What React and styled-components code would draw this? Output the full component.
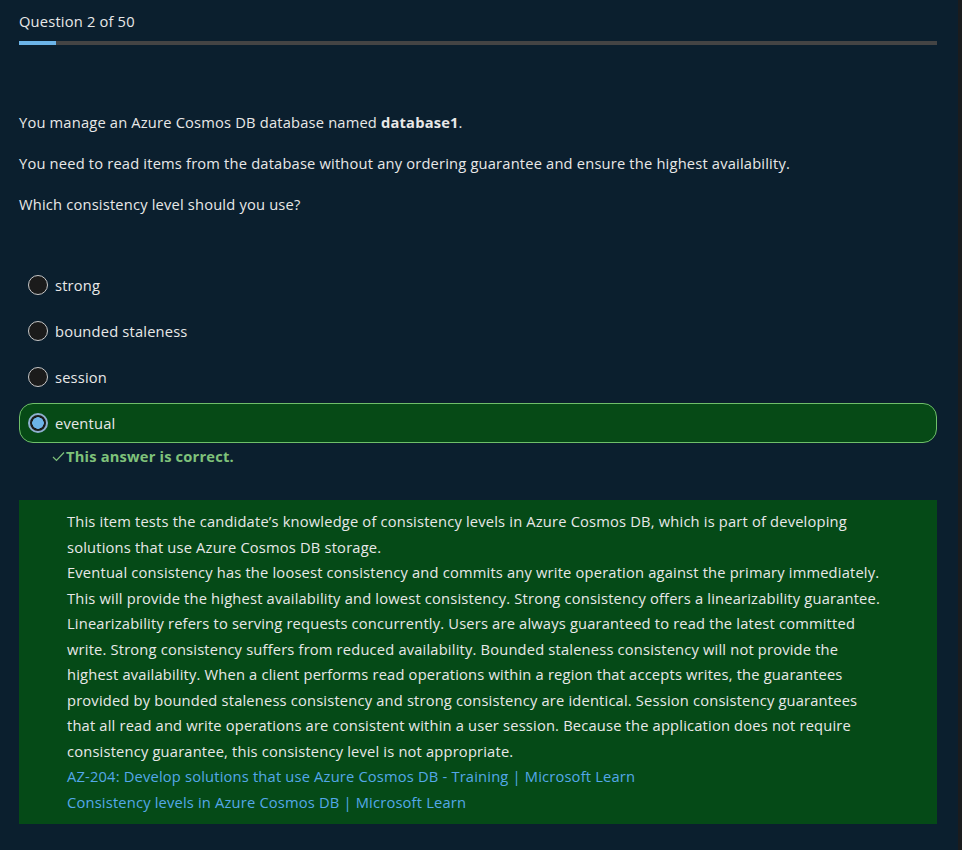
import styled, { createGlobalStyle } from "styled-components";

const GlobalStyle = createGlobalStyle`
  body {
    margin: 0;
    background: #0b1f2e;
    font-family: "Open Sans", "Noto Sans", sans-serif;
    color: #e8e8e8;
  }
`;

const options = [
  { label: "strong" },
  { label: "bounded staleness" },
  { label: "session" },
  { label: "eventual", selected: true },
];

export default function App() {
  return (
    <>
      <GlobalStyle />
      <Page>
        <Header>
          <Counter>Question 2 of 50</Counter>
          <Progress>
            <ProgressFill style={{ width: `${(2 / 50) * 100}%` }} />
          </Progress>
        </Header>

        <Question>
          <Para>
            You manage an Azure Cosmos DB database named <b>database1</b>.
          </Para>
          <Para>
            You need to read items from the database without any ordering
            guarantee and ensure the highest availability.
          </Para>
          <Para>Which consistency level should you use?</Para>
        </Question>

        <Options>
          {options.map((o) => (
            <Option key={o.label} $selected={o.selected}>
              <Radio $selected={o.selected} />
              <span>{o.label}</span>
            </Option>
          ))}
        </Options>
        <Correct>
          <svg width="13" height="11" viewBox="0 0 13 11">
            <polyline
              points="1,6 4.5,9.5 12,1.5"
              fill="none"
              stroke="#7fc27a"
              strokeWidth="1.2"
            />
          </svg>
          This answer is correct.
        </Correct>

        <Explanation>
          This item tests the candidate’s knowledge of consistency levels in
          Azure Cosmos DB, which is part of developing solutions that use Azure
          Cosmos DB storage.
          <br />
          Eventual consistency has the loosest consistency and commits any write
          operation against the primary immediately. This will provide the
          highest availability and lowest consistency. Strong consistency offers
          a linearizability guarantee. Linearizability refers to serving
          requests concurrently. Users are always guaranteed to read the latest
          committed write. Strong consistency suffers from reduced availability.
          Bounded staleness consistency will not provide the highest
          availability. When a client performs read operations within a region
          that accepts writes, the guarantees provided by bounded staleness
          consistency and strong consistency are identical. Session consistency
          guarantees that all read and write operations are consistent within a
          user session. Because the application does not require consistency
          guarantee, this consistency level is not appropriate.
          <LinkLine href="#">
            AZ-204: Develop solutions that use Azure Cosmos DB - Training |
            Microsoft Learn
          </LinkLine>
          <LinkLine href="#">
            Consistency levels in Azure Cosmos DB | Microsoft Learn
          </LinkLine>
        </Explanation>
      </Page>
    </>
  );
}

const Page = styled.div`
  min-height: 100vh;
  box-sizing: border-box;
  padding: 12px 21px 27px 19px;
  border-right: 4px solid #1a1c1e;
  font-size: 14.7px;
  letter-spacing: 0.18px;
`;

const Header = styled.div`
  display: flex;
  flex-direction: column;
  gap: 11px;
`;

const Counter = styled.div`
  line-height: 18px;
`;

const Progress = styled.div`
  height: 4px;
  background: #444444;
`;

const ProgressFill = styled.div`
  height: 100%;
  background: #6cb4e8;
`;

const Question = styled.div`
  margin-top: 67px;
`;

const Para = styled.p`
  margin: 0 0 21px;
  line-height: 20px;

  b {
    font-weight: 700;
  }
`;

const Options = styled.div`
  margin-top: 51px;
  display: flex;
  flex-direction: column;
  gap: 6px;
`;

const Option = styled.div`
  height: 40px;
  box-sizing: border-box;
  display: flex;
  align-items: center;
  gap: 7px;
  padding-left: 8px;
  border-radius: 14px;
  border: 1px solid ${(p) => (p.$selected ? "#6fbf6a" : "transparent")};
  background: ${(p) => (p.$selected ? "#064a16" : "transparent")};
`;

const Radio = styled.span`
  width: 20px;
  height: 20px;
  box-sizing: border-box;
  border-radius: 50%;
  border: ${(p) => (p.$selected ? "2px solid #8fb0d0" : "1px solid #c8c8c8")};
  background: ${(p) =>
    p.$selected
      ? "radial-gradient(circle, #6cb4e8 0 5.5px, #1b1b1b 6px)"
      : "#1b1b1b"};
`;

const Correct = styled.div`
  margin: 3px 0 0 33px;
  display: flex;
  align-items: center;
  gap: 1px;
  color: #7fc27a;
  font-weight: 700;
  line-height: 20px;
`;

const Explanation = styled.div`
  margin-top: 34px;
  background: #054a17;
  padding: 9px 49px 9px 48px;
  line-height: 25.5px;
`;

const LinkLine = styled.a`
  display: block;
  color: #54a8e8;
  text-decoration: none;
`;
